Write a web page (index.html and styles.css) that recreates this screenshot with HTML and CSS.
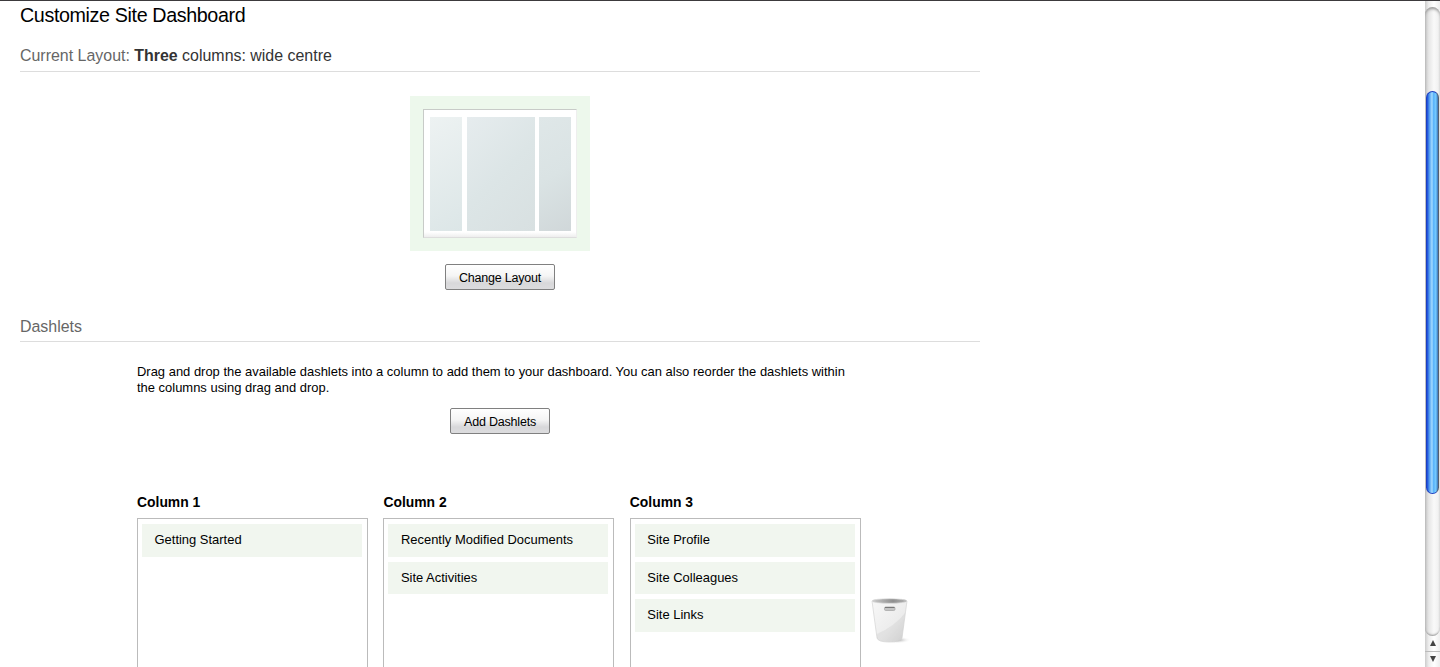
FILE: index.html
```html
<!DOCTYPE html>
<html lang="en">
  <head>
    <meta charset="UTF-8" />
    <title>Customize Site Dashboard</title>
    <link rel="stylesheet" href="styles.css">
  </head>

  <body>
    <div class="window">
      <div class="page">
        <h1>Customize Site Dashboard</h1>
        <h2>Current Layout: <span><b>Three</b> columns: wide centre</span></h2>

        <div class="layout-box">
          <div class="layout-preview">
            <div class="pane left"></div>
            <div class="pane centre"></div>
            <div class="pane right"></div>
          </div>
        </div>
        <button class="btn-layout">Change Layout</button>

        <h2 class="dashlets-title">Dashlets</h2>
        <p class="instructions">
          Drag and drop the available dashlets into a column to add them to your
          dashboard. You can also reorder the dashlets within<br />
          the columns using drag and drop.
        </p>
        <button class="btn-add">Add Dashlets</button>

        <div class="columns">
          <div class="column">
            <h3>Column 1</h3>
            <ul>
              <li>Getting Started</li>
            </ul>
          </div>
          <div class="column">
            <h3>Column 2</h3>
            <ul>
              <li>Recently Modified Documents</li>
              <li>Site Activities</li>
            </ul>
          </div>
          <div class="column">
            <h3>Column 3</h3>
            <ul>
              <li>Site Profile</li>
              <li>Site Colleagues</li>
              <li>Site Links</li>
            </ul>
          </div>
          <svg class="trash" width="42" height="48" viewBox="0 0 42 48">
            <defs>
              <linearGradient id="bin" x1="0" y1="0" x2="1" y2="1">
                <stop offset="0" stop-color="#f8f8f8" />
                <stop offset="0.6" stop-color="#ececec" />
                <stop offset="1" stop-color="#d4d4d4" />
              </linearGradient>
              <linearGradient id="rim" x1="0" y1="0" x2="1" y2="0">
                <stop offset="0" stop-color="#cccccc" />
                <stop offset="0.6" stop-color="#8f8f8f" />
                <stop offset="1" stop-color="#b5b5b5" />
              </linearGradient>
              <radialGradient id="shadow">
                <stop offset="0" stop-color="#999999" />
                <stop offset="1" stop-color="#ffffff" stop-opacity="0" />
              </radialGradient>
            </defs>
            <ellipse cx="26" cy="42" rx="14" ry="3.5" fill="url(#shadow)" />
            <path d="M1 3 L6 40 Q7 44 18 44 Q30 44 31 40 L36 3 Z" fill="url(#bin)" stroke="#d4d4d4" stroke-width="0.7" />
            <path d="M6 36 Q24 28 34 15 L31 40 Q30 43.5 18 43.5 Q7 43.5 6 40 Z" fill="#bbbbbb" opacity="0.22" />
            <ellipse cx="18.5" cy="3" rx="17.5" ry="2.3" fill="url(#rim)" stroke="#dddddd" stroke-width="0.7" />
            <rect x="13.5" y="9" width="10.5" height="3.5" rx="1.2" fill="#c4c4c4" stroke="#aaaaaa" stroke-width="0.8" />
            <path d="M14 9.5 H23.5" stroke="#777777" stroke-width="1" />
          </svg>
        </div>
      </div>

      <div class="scrollbar">
        <div class="track">
          <div class="thumb"></div>
        </div>
        <div class="arrow up"></div>
        <div class="arrow down"></div>
      </div>
    </div>
  </body>
</html>
```
FILE: styles.css
```css
body {
  margin: 0;
  background: #fff;
  color: #000;
  font-family: Arial, "Liberation Sans", sans-serif;
  font-size: 12.96px;
  overflow: hidden;
}

.window {
  display: flex;
  justify-content: space-between;
  box-sizing: border-box;
  height: 667px;
  border-top: 1px solid #3c3a3d;
  overflow: hidden;
}

.page {
  width: 960px;
  margin-left: 20px;
}

h1 {
  margin: 2px 0 0;
  font-size: 19.7px;
  font-weight: normal;
  letter-spacing: -0.37px;
  line-height: 24px;
}

h2 {
  margin: 17px 0 0;
  padding-bottom: 4px;
  border-bottom: 1px solid #ddd;
  color: #666;
  font-size: 15.95px;
  font-weight: normal;
  line-height: 23px;
}

h2 span {
  color: #333;
}

.layout-box {
  box-sizing: border-box;
  width: 180px;
  height: 155px;
  margin: 24px auto 13px;
  padding: 13px;
  background: #edf8ec;
}

.layout-preview {
  display: flex;
  gap: 4.5px;
  box-sizing: border-box;
  height: 129px;
  padding: 7px 5px 6px 6px;
  border: 1px solid #c8cbc8;
  border-right-color: #eee;
  border-bottom-color: #ddd;
  background: linear-gradient(#fff 96%, #eee);
}

.pane {
  width: 32px;
}

.left {
  background: linear-gradient(150deg, #edf2f2, #dce6e7);
}

.centre {
  width: 68px;
  background: linear-gradient(135deg, #e6ecee, #dce5e6 50%, #d8e0e1);
}

.right {
  background: linear-gradient(150deg, #dfe7e8, #dae3e4 50%, #d0d7d9);
}

button {
  display: block;
  box-sizing: border-box;
  height: 26px;
  margin: 0 auto;
  padding: 2px 0 0;
  border: 1px solid #808080;
  border-radius: 2px;
  background: linear-gradient(#fff, #f5f5f5 45%, #d8d8da 75%, #dcdcde);
  color: #000;
  font-family: inherit;
  font-size: 12.5px;
  letter-spacing: -0.2px;
}

.btn-layout {
  width: 110px;
}

.btn-add {
  width: 100px;
}

.dashlets-title {
  margin-top: 25px;
  padding-bottom: 3px;
}

.instructions {
  margin: 22px 0 12px 117px;
  line-height: 16px;
  white-space: nowrap;
}

.columns {
  display: flex;
  gap: 15.4px;
  margin: 58px 0 0 117px;
}

h3 {
  margin: 0 0 6px;
  font-size: 13.9px;
  line-height: 20px;
}

ul {
  box-sizing: border-box;
  width: 231px;
  height: 200px;
  margin: 0;
  padding: 5px 5px 0 4px;
  border: 1px solid #bbb;
  list-style: none;
}

li {
  height: 32.5px;
  margin-bottom: 5px;
  padding-left: 12.5px;
  background: #f1f6ef;
  line-height: 31px;
}

.trash {
  flex: none;
  margin: 106px 0 0 -5px;
}

.scrollbar {
  width: 15px;
  height: 666px;
  background: linear-gradient(90deg, #ccc, #eee 25%, #fff 60%, #eee);
}

.track {
  box-sizing: border-box;
  height: 629px;
  margin-top: 6px;
  padding: 84px 0 0 1px;
  border-radius: 8px;
  background: linear-gradient(90deg, #c4c4c4, #e6e6e6 25%, #f9f9f9 60%, #eee);
  box-shadow: inset 0 3px 3px -1px #999, inset 0 -2px 2px -1px #999;
}

.thumb {
  box-sizing: border-box;
  width: 13px;
  height: 403px;
  border: 1px solid #1c3fc0;
  border-right-color: #555f70;
  border-radius: 7px;
  background: linear-gradient(90deg, #1747d8, #5ba7f2 25%, #a5dcff 45%, #58b2fa 60%, #76ccff 80%, #3b72b5);
}

.arrow {
  display: flex;
  align-items: center;
  justify-content: center;
  box-sizing: border-box;
  height: 16px;
  padding-bottom: 1px;
  border-bottom: 1px solid #bbb;
}

.arrow::before {
  content: "";
  border: 3.5px solid transparent;
}

.up::before {
  border-bottom: 6px solid #444;
  border-top: 0;
}

.down::before {
  border-top: 6px solid #444;
  border-bottom: 0;
}
```
